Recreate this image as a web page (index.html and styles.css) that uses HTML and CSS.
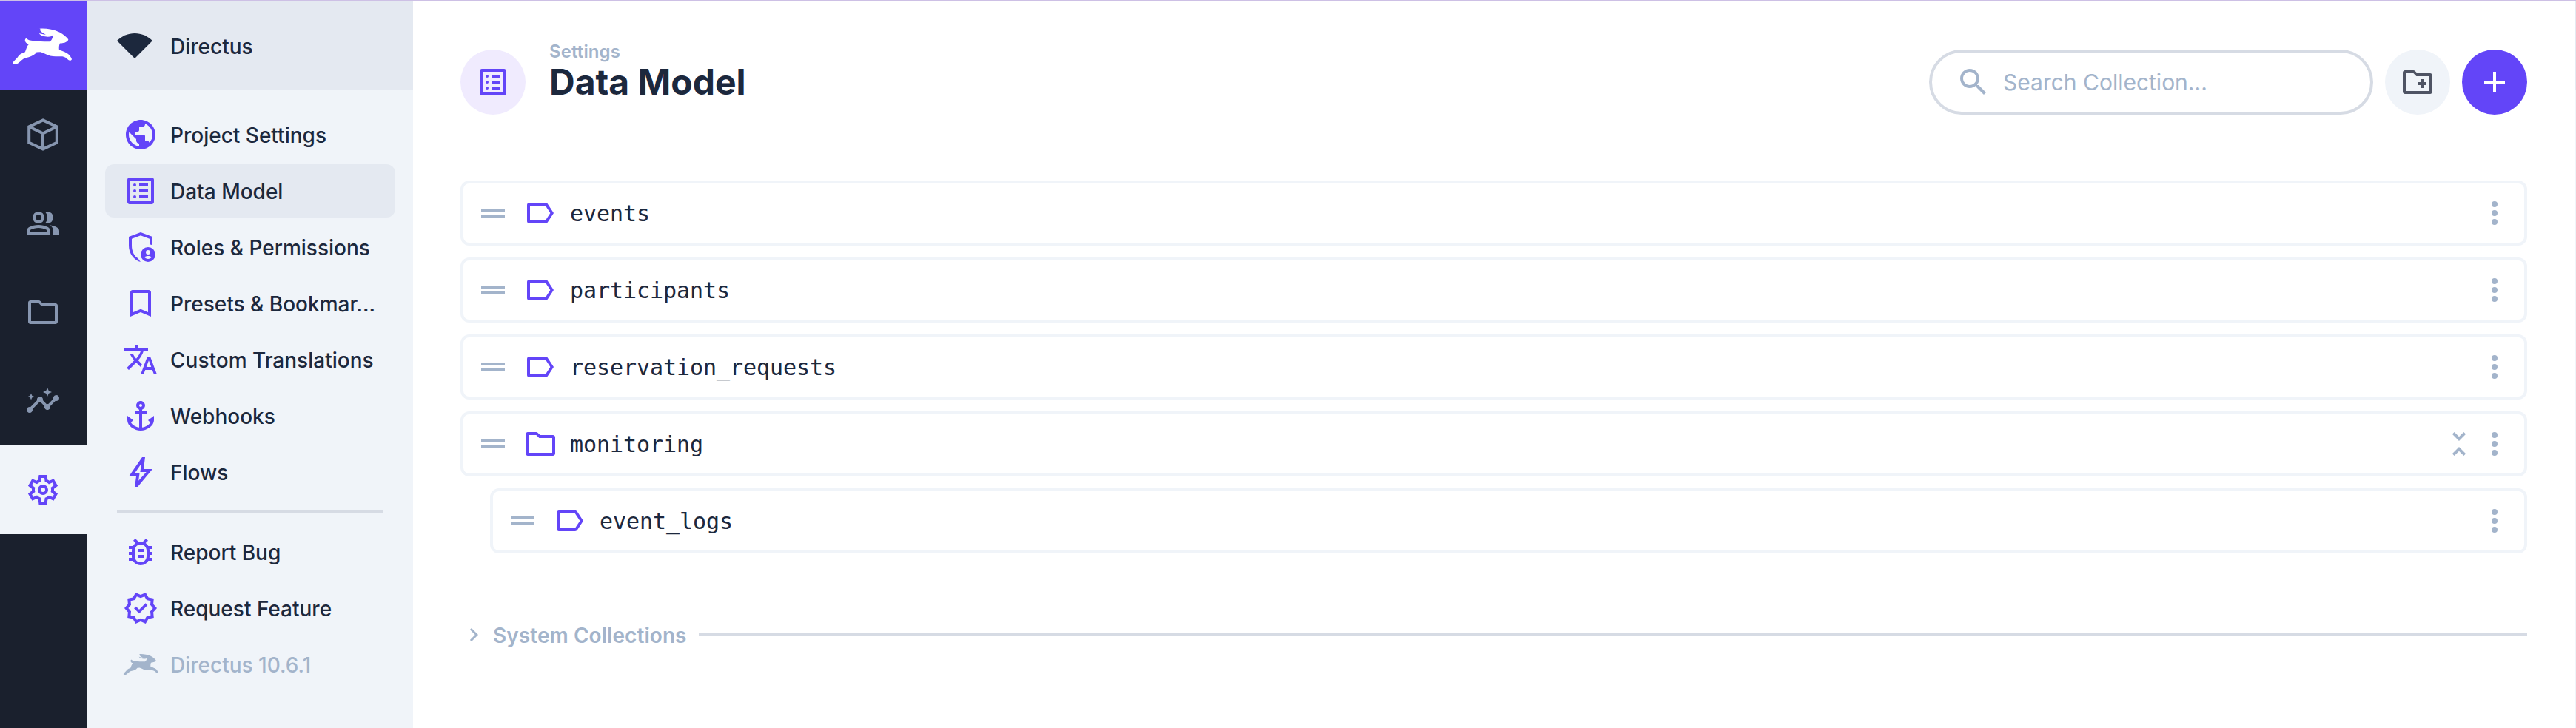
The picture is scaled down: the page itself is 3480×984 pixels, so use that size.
FILE: index.html
```html
<!DOCTYPE html>
<html lang="en">
<head>
<meta charset="utf-8">
<title>Data Model</title>
<link rel="stylesheet" href="styles.css">
</head>
<body>
<svg class="sprite" aria-hidden="true">
  <symbol id="hare" viewBox="50 110 245 152">
    <path d="M162 115C185 113 218 117 242 129C258 137 271 149 278 158C276 168 263 173 244 174C240 182 240 193 241 201C256 206 272 212 281 220C286 225 290 233 292 238C291 244 283 245 278 241C272 235 265 229 254 227C238 226 222 229 205 225C190 221 178 212 165 209L150 210C143 220 132 226 118 230C110 233 103 233 98 236C87 244 77 254 71 257C64 260 54 258 54 252C59 244 67 238 73 231C79 222 85 216 94 214C99 213 102 212 104 208C108 196 112 184 119 177C111 177 104 170 103 163C103 156 107 153 111 154C113 161 124 163 138 164C160 165 183 168 203 167C211 163 215 151 217 139L210 146C195 150 169 148 160 134C168 136 177 139 187 139C179 135 168 130 164 122L168 120Z"/>
  </symbol>
  <symbol id="wedge" viewBox="0 0 48 34"><path d="M0 10C7 3.500 15 0 24 0s17 3.500 24 10L24 34z"/></symbol>
  <symbol id="box" viewBox="0 0 24 24"><path fill="none" stroke="currentColor" stroke-width="2" d="M12 2.200l9.400 4.400v10.800L12 21.800l-9.400-4.400V6.600zM2.600 6.600l9.400 4.500 9.400-4.500M12 11.100v10.700"/></symbol>
  <symbol id="people" viewBox="0 0 24 24"><path fill-rule="evenodd" d="M1 20v-2.800q0-.85.438-1.563Q1.875 14.925 2.600 14.550 4.150 13.775 5.750 13.387 7.350 13 9 13t3.250.387q1.600.388 3.150 1.163.725.375 1.162 1.087Q17 16.350 17 17.200V20zm18 0v-3q0-1.100-.613-2.112-.612-1.013-1.737-1.738 1.275.15 2.400.512 1.125.363 2.100.888.9.5 1.375 1.112Q23 16.275 23 17v3zM9 12q-1.650 0-2.825-1.175T5 8t1.175-2.825T9 4t2.825 1.175T13 8t-1.175 2.825T9 12m10-4q0 1.650-1.175 2.825T15 12q-.275 0-.7-.063-.425-.062-.7-.137.675-.8 1.037-1.775Q15 9.050 15 8q0-1.050-.363-2.025Q14.275 5 13.600 4.200q.35-.125.7-.163Q14.650 4 15 4q1.650 0 2.825 1.175T19 8M3 18h12v-.8q0-.275-.137-.5-.138-.225-.363-.35-1.350-.675-2.725-1.013Q10.400 15 9 15t-2.775.337Q4.850 15.675 3.500 16.350q-.225.125-.362.35-.138.225-.138.5zm6-8q.825 0 1.413-.588Q11 8.825 11 8t-.587-1.413Q9.825 6 9 6t-1.412.587Q7 7.175 7 8t.588 1.412Q8.175 10 9 10"/></symbol>
  <symbol id="folder" viewBox="0 0 24 24"><path fill-rule="evenodd" d="M3.500 4h5.600c.5 0 .9.200 1.200.5L11.800 6h8.700c.8 0 1.500.7 1.500 1.500v11c0 .8-.7 1.500-1.500 1.500h-17c-.8 0-1.500-.7-1.500-1.500v-13C2 4.700 2.700 4 3.500 4zM4 6v12h16V8h-8.800l-2-2z"/></symbol>
  <symbol id="folder-add" viewBox="0 0 24 24"><path fill-rule="evenodd" d="M3.500 4h5.600c.5 0 .9.200 1.200.5L11.800 6h8.700c.8 0 1.500.7 1.500 1.500v11c0 .8-.7 1.500-1.500 1.500h-17c-.8 0-1.500-.7-1.500-1.500v-13C2 4.700 2.700 4 3.500 4zM4 6v12h16V8h-8.800l-2-2zM14 10h2v2h2v2h-2v2h-2v-2h-2v-2h2z"/></symbol>
  <symbol id="insights" viewBox="0 0 24 24"><path d="M21 8c-1.450 0-2.260 1.440-1.930 2.510l-3.550 3.560c-.3-.09-.74-.09-1.040 0l-2.550-2.550C12.270 10.450 11.460 9 10 9c-1.450 0-2.270 1.440-1.930 2.520l-4.560 4.550C2.440 15.740 1 16.550 1 18c0 1.100.9 2 2 2 1.450 0 2.260-1.440 1.930-2.510l4.550-4.560c.3.09.74.09 1.040 0l2.550 2.550C12.730 16.550 13.540 18 15 18c1.450 0 2.270-1.440 1.930-2.520l3.560-3.550c1.070.33 2.510-.48 2.510-1.930 0-1.100-.9-2-2-2zM15 9l.94-2.070L18 6l-2.060-.93L15 3l-.92 2.070L12 6l2.080.93zM4 11.300l.6-1.600 1.600-.7-1.600-.6L4 6.800l-.6 1.600-1.600.6 1.600.7z"/></symbol>
  <symbol id="gear" viewBox="0 0 24 24"><path fill-rule="evenodd" d="m9.250 22-.4-3.200q-.325-.125-.612-.3-.288-.175-.563-.375L4.700 19.375l-2.750-4.750 2.575-1.950Q4.500 12.500 4.500 12.337v-.675q0-.162.025-.337L1.950 9.375l2.750-4.750 2.975 1.250q.275-.2.575-.375.3-.175.6-.3l.4-3.200h5.500l.4 3.200q.325.125.613.3.287.175.562.375l2.975-1.250 2.750 4.750-2.575 1.950q.025.175.025.337v.675q0 .163-.05.338l2.575 1.950-2.750 4.750-2.950-1.250q-.275.2-.575.375-.3.175-.6.3l-.4 3.200zM11 20h1.975l.35-2.650q.775-.2 1.438-.587.662-.388 1.212-.938l2.475 1.025.975-1.700-2.150-1.625q.125-.35.175-.738.05-.387.05-.787t-.05-.787q-.05-.388-.175-.738l2.150-1.625-.975-1.700-2.475 1.050q-.55-.575-1.212-.963-.663-.387-1.438-.587L13 4h-1.975l-.35 2.650q-.775.2-1.437.587-.663.388-1.213.938L5.550 7.150l-.975 1.700 2.150 1.600q-.125.375-.175.75-.05.375-.05.8 0 .4.05.775t.175.75l-2.150 1.625.975 1.700 2.475-1.050q.55.575 1.213.962.662.388 1.437.588z"/><circle cx="12" cy="12" r="2.500" fill="none" stroke="currentColor" stroke-width="2"/></symbol>
  <symbol id="globe" viewBox="0 0 24 24"><path d="M12 2C6.480 2 2 6.480 2 12s4.480 10 10 10 10-4.480 10-10S17.520 2 12 2zm-1 17.930c-3.950-.49-7-3.850-7-7.930 0-.62.08-1.210.21-1.790L9 15v1c0 1.100.9 2 2 2v1.930zm6.900-2.540c-.26-.81-1-1.390-1.900-1.390h-1v-3c0-.55-.45-1-1-1H8v-2h2c.55 0 1-.45 1-1V7h2c1.100 0 2-.9 2-2v-.41c2.930 1.190 5 4.060 5 7.410 0 2.080-.8 3.970-2.100 5.390z"/></symbol>
  <symbol id="list" viewBox="0 0 24 24"><path fill-rule="evenodd" d="M4.500 3h15c.8 0 1.500.7 1.500 1.500v15c0 .8-.7 1.500-1.500 1.500h-15c-.8 0-1.500-.7-1.500-1.500v-15C3 3.700 3.700 3 4.500 3zM5 5v14h14V5zM11 7h6v2h-6zM11 11h6v2h-6zM11 15h6v2h-6z"/><circle cx="8" cy="8" r="1"/><circle cx="8" cy="12" r="1"/><circle cx="8" cy="16" r="1"/></symbol>
  <symbol id="shield" viewBox="0 0 24 24"><path d="M12 2L4 5v6.090c0 5.050 3.410 9.760 8 10.910-.7-.7-1.300-1.500-1.700-2.400C7.700 18.100 6 14.800 6 11.090V6.390l6-2.250 6 2.250v3.700c.7.100 1.400.3 2 .6V5z"/><path fill-rule="evenodd" d="M17 12a5 5 0 1 0 0 10 5 5 0 0 0 0-10zM17 14a1.500 1.500 0 1 1 0 3 1.500 1.500 0 0 1 0-3zM14.500 18.800c.6-.5 1.500-.8 2.500-.8s1.900.3 2.500.8c-.6.7-1.500 1.200-2.500 1.200s-1.900-.5-2.500-1.200z"/></symbol>
  <symbol id="bookmark" viewBox="0 0 24 24"><path fill-rule="evenodd" d="M17.500 3h-11C5.700 3 5 3.700 5 4.500V21l7-3 7 3V4.500c0-.8-.7-1.500-1.500-1.500zM17 18l-5-2.180L7 18V5h10z"/></symbol>
  <symbol id="translate" viewBox="0 0 24 24"><path d="M12.870 15.070l-2.540-2.510.03-.03c1.740-1.940 2.980-4.170 3.710-6.530H17V4h-7V2H8v2H1v1.990h11.170C11.500 7.920 10.440 9.750 9 11.350 8.070 10.320 7.300 9.190 6.690 8h-2c.73 1.630 1.730 3.170 2.980 4.560l-5.090 5.020L4 19l5-5 3.110 3.110.76-2.040zM18.500 10h-2L12 22h2l1.120-3h4.750L21 22h2l-4.500-12zm-2.620 7l1.620-4.330L19.120 17h-3.240z"/></symbol>
  <symbol id="anchor" viewBox="0 0 24 24"><path d="M17 15l1.550 1.550c-.96 1.690-3.330 3.040-5.550 3.370V11h3V9h-3V7.820C14.160 7.400 15 6.300 15 5c0-1.650-1.350-3-3-3S9 3.350 9 5c0 1.300.84 2.400 2 2.820V9H8v2h3v8.920c-2.220-.33-4.590-1.680-5.550-3.370L7 15l-4-3v3c0 3.880 4.920 7 9 7s9-3.120 9-7v-3l-4 3zM12 4c.55 0 1 .45 1 1s-.45 1-1 1-1-.45-1-1 .45-1 1-1z"/></symbol>
  <symbol id="bolt" viewBox="0 0 24 24"><path fill-rule="evenodd" d="M8 22l1-7H4l9-13h2l-1 8h6L10 22zM10.550 17.900L15.850 12H11.700l.75-5.650L7.850 13h3.400z"/></symbol>
  <symbol id="bug" viewBox="0 0 24 24"><path d="M20 8h-2.810c-.45-.78-1.070-1.450-1.820-1.960L17 4.410 15.590 3l-2.170 2.170C12.960 5.060 12.490 5 12 5s-.96.06-1.410.17L8.410 3 7 4.410l1.620 1.630C7.880 6.550 7.260 7.220 6.810 8H4v2h2.090c-.05.33-.09.66-.09 1v1H4v2h2v1c0 .34.04.67.09 1H4v2h2.810c1.040 1.790 2.970 3 5.190 3s4.150-1.210 5.190-3H20v-2h-2.090c.05-.33.09-.66.09-1v-1h2v-2h-2v-1c0-.34-.04-.67-.09-1H20V8zm-4 4v3c0 2.210-1.790 4-4 4s-4-1.790-4-4v-4c0-2.210 1.790-4 4-4s4 1.790 4 4v1zm-6 2h4v2h-4zm0-4h4v2h-4z"/></symbol>
  <symbol id="verified" viewBox="0 0 24 24"><path fill-rule="evenodd" d="M23 12l-2.440-2.790.34-3.690-3.610-.82-1.890-3.200L12 2.960 8.600 1.500 6.710 4.690 3.100 5.500l.34 3.700L1 12l2.440 2.790-.34 3.700 3.610.82L8.600 22.500l3.400-1.470 3.400 1.460 1.890-3.190 3.610-.82-.34-3.690L23 12zm-4.510 2.110l.26 2.790-2.740.62-1.430 2.410L12 18.820l-2.580 1.110-1.430-2.410-2.740-.62.26-2.800L3.660 12l1.850-2.120-.26-2.780 2.740-.61 1.430-2.410L12 5.180l2.580-1.110 1.430 2.410 2.740.62-.26 2.790L20.340 12l-1.850 2.110z"/><path fill="none" stroke="currentColor" stroke-width="1.900" d="M8.200 11.500l2.800 2.800 5-5"/></symbol>
  <symbol id="search" viewBox="0 0 24 24"><path d="M15.500 14h-.79l-.28-.27C15.410 12.590 16 11.110 16 9.500 16 5.910 13.090 3 9.500 3S3 5.910 3 9.500 5.910 16 9.500 16c1.610 0 3.090-.59 4.230-1.570l.27.28v.79l5 4.990L20.490 19l-4.990-5zm-6 0C7.010 14 5 11.990 5 9.500S7.010 5 9.500 5 14 7.010 14 9.500 11.990 14 9.500 14z"/></symbol>
  <symbol id="plus" viewBox="0 0 24 24"><path d="M19 13h-6v6h-2v-6H5v-2h6V5h2v6h6z"/></symbol>
  <symbol id="drag" viewBox="0 0 24 24"><path d="M4 9h16v2H4zM4 13h16v2H4z"/></symbol>
  <symbol id="label" viewBox="0 0 24 24"><path fill-rule="evenodd" d="M4.500 5h11c.6 0 1.100.3 1.400.7L21 12l-4.100 6.300c-.3.4-.8.7-1.400.7h-11c-.8 0-1.500-.7-1.500-1.500v-11C3 5.700 3.700 5 4.500 5zM5 7v10h10.400l3.300-5-3.300-5z"/></symbol>
  <symbol id="more" viewBox="0 0 24 24"><circle cx="12" cy="6" r="2"/><circle cx="12" cy="12" r="2"/><circle cx="12" cy="18" r="2"/></symbol>
  <symbol id="collapse" viewBox="0 0 24 24"><path d="M7.410 18.590L8.830 20 12 16.830 15.170 20l1.410-1.410L12 14l-4.590 4.590zm9.180-13.180L15.170 4 12 7.170 8.830 4 7.410 5.410 12 10l4.590-4.590z"/></symbol>
  <symbol id="chevron" viewBox="0 0 24 24"><path d="M10 6L8.590 7.410 13.170 12l-4.580 4.590L10 18l6-6z"/></symbol>
</svg>

<div class="app">
  <div class="modules">
    <div class="module module-logo"><svg class="hare-logo"><use href="#hare"/></svg></div>
    <div class="module"><svg class="icon"><use href="#box"/></svg></div>
    <div class="module"><svg class="icon"><use href="#people"/></svg></div>
    <div class="module"><svg class="icon"><use href="#folder"/></svg></div>
    <div class="module"><svg class="icon"><use href="#insights"/></svg></div>
    <div class="module module-active"><svg class="icon"><use href="#gear"/></svg></div>
  </div>

  <aside class="nav">
    <div class="project"><svg class="wedge"><use href="#wedge"/></svg><span>Directus</span></div>
    <nav class="nav-list">
      <a class="nav-item"><svg class="icon"><use href="#globe"/></svg><span>Project Settings</span></a>
      <a class="nav-item nav-active"><svg class="icon"><use href="#list"/></svg><span>Data Model</span></a>
      <a class="nav-item"><svg class="icon"><use href="#shield"/></svg><span>Roles &amp; Permissions</span></a>
      <a class="nav-item"><svg class="icon"><use href="#bookmark"/></svg><span>Presets &amp; Bookmar...</span></a>
      <a class="nav-item"><svg class="icon"><use href="#translate"/></svg><span>Custom Translations</span></a>
      <a class="nav-item"><svg class="icon"><use href="#anchor"/></svg><span>Webhooks</span></a>
      <a class="nav-item"><svg class="icon"><use href="#bolt"/></svg><span>Flows</span></a>
      <div class="nav-divider"></div>
      <a class="nav-item"><svg class="icon"><use href="#bug"/></svg><span>Report Bug</span></a>
      <a class="nav-item"><svg class="icon"><use href="#verified"/></svg><span>Request Feature</span></a>
      <a class="nav-item nav-version"><svg class="icon"><use href="#hare"/></svg><span>Directus 10.6.1</span></a>
    </nav>
  </aside>

  <main class="main">
    <header class="header">
      <div class="round title-icon"><svg class="icon"><use href="#list"/></svg></div>
      <div class="titles">
        <div class="crumb">Settings</div>
        <h1 class="title">Data Model</h1>
      </div>
      <div class="actions">
        <div class="search"><svg class="icon"><use href="#search"/></svg><span>Search Collection...</span></div>
        <div class="round add-folder"><svg class="icon"><use href="#folder-add"/></svg></div>
        <div class="round add"><svg class="icon"><use href="#plus"/></svg></div>
      </div>
    </header>

    <section class="rows">
      <div class="row"><svg class="icon muted"><use href="#drag"/></svg><svg class="icon accent"><use href="#label"/></svg><span class="name">events</span><svg class="icon muted"><use href="#more"/></svg></div>
      <div class="row"><svg class="icon muted"><use href="#drag"/></svg><svg class="icon accent"><use href="#label"/></svg><span class="name">participants</span><svg class="icon muted"><use href="#more"/></svg></div>
      <div class="row"><svg class="icon muted"><use href="#drag"/></svg><svg class="icon accent"><use href="#label"/></svg><span class="name">reservation_requests</span><svg class="icon muted"><use href="#more"/></svg></div>
      <div class="row"><svg class="icon muted"><use href="#drag"/></svg><svg class="icon accent"><use href="#folder"/></svg><span class="name">monitoring</span><svg class="icon muted"><use href="#collapse"/></svg><svg class="icon muted"><use href="#more"/></svg></div>
      <div class="row row-nested"><svg class="icon muted"><use href="#drag"/></svg><svg class="icon accent"><use href="#label"/></svg><span class="name">event_logs</span><svg class="icon muted"><use href="#more"/></svg></div>
    </section>

    <div class="system"><svg class="chevron"><use href="#chevron"/></svg><span>System Collections</span><div class="system-line"></div></div>
  </main>

  <div class="rail"><div class="rail-head"></div></div>
</div>
</body>
</html>
```
FILE: styles.css
```css
* { box-sizing: border-box; }

body {
  margin: 0;
  background: #fff;
  color: #1c283d;
  font-family: Inter, "Liberation Sans", sans-serif;
  font-size: 28px;
  font-weight: 500;
  line-height: 36px;
}

.sprite { display: none; }

svg { fill: currentColor; flex: none; display: block; }

.icon { width: 48px; height: 48px; }
.muted { color: #a3b4cb; }
.accent { color: #6345f8; }

.app {
  display: flex;
  height: 984px;
  border-top: 2px solid #cdc0e5;
  overflow: hidden;
}

/* Module bar */
.modules { width: 118px; flex: none; background: #1a202d; }
.module {
  height: 120px;
  display: flex;
  align-items: center;
  justify-content: center;
  padding-right: 2px;
  color: #8796b0;
}
.module-logo { background: #6345f8; color: #fff; padding: 0 4px 0 0; }
.module-active { background: #f0f4f9; color: #6345f8; }
.hare-logo { width: 82px; height: 51px; }

/* Navigation */
.nav { width: 440px; flex: none; background: #f0f4f9; }
.project {
  height: 120px;
  padding-left: 40px;
  display: flex;
  align-items: center;
  gap: 24px;
  background: #e4e9f1;
}
.wedge { width: 48px; height: 34px; }
.project span, .nav-item span { padding-top: 2px; }
.nav-list { padding: 24px; display: flex; flex-direction: column; gap: 4px; }
.nav-item {
  height: 72px;
  padding: 0 16px 0 24px;
  border-radius: 12px;
  display: flex;
  align-items: center;
  gap: 16px;
  white-space: nowrap;
}
.nav-item .icon { color: #6345f8; }
.nav-active { background: #e4e9f1; }
.nav-divider { height: 4px; margin: 12px 16px; background: #d6dbe4; }
.nav-version, .nav-item.nav-version .icon { color: #a3b4cb; }

/* Main */
.main { flex: 1; padding: 0 64px; }
.header { margin-top: 65px; height: 88px; display: flex; align-items: center; }
.round {
  width: 88px;
  height: 88px;
  flex: none;
  border-radius: 50%;
  display: flex;
  align-items: center;
  justify-content: center;
}
.title-icon { background: #f0ebfe; color: #6345f8; }
.titles { margin: -34px 0 0 32px; }
.crumb { color: #a3b4cb; font-size: 24px; font-weight: 600; line-height: 34px; letter-spacing: 0.1px; }
.title { margin: 0; font-size: 48px; font-weight: 700; line-height: 48px; }
.actions { margin-left: auto; display: flex; gap: 16px; }
.search {
  width: 600px;
  height: 88px;
  border: 4px solid #d6dbe4;
  border-radius: 44px;
  padding-left: 32px;
  display: flex;
  align-items: center;
  gap: 16px;
  color: #a3b4cb;
  font-size: 30px;
  font-weight: 400;
}
.add-folder { background: #f0f4f9; color: #4f5464; }
.add { background: #6345f8; color: #fff; }

/* Collections */
.rows { margin-top: 89px; display: flex; flex-direction: column; gap: 16px; }
.row {
  height: 88px;
  border: 4px solid #f0f4f9;
  border-radius: 12px;
  padding: 0 16px;
  display: flex;
  align-items: center;
}
.row-nested { margin-left: 40px; }
.row .accent { margin: 0 16px; }
.name {
  margin-right: auto;
  padding-top: 2px;
  font-family: "DejaVu Sans Mono", monospace;
  font-size: 30px;
  font-weight: 400;
  letter-spacing: -0.06px;
}

.system {
  margin-top: 92px;
  display: flex;
  align-items: center;
  color: #a3b4cb;
  font-weight: 600;
}
.system span { height: 36px; line-height: 38px; letter-spacing: 0.06px; }
.chevron { width: 36px; height: 36px; margin-right: 8px; }
.system-line { flex: 1; height: 4px; margin-left: 16px; background: #d6dbe4; }

/* Collapsed sidebar edge */
.rail { width: 2px; flex: none; background: #f0f4f9; }
.rail-head { height: 120px; background: #e4e9f1; }
```
